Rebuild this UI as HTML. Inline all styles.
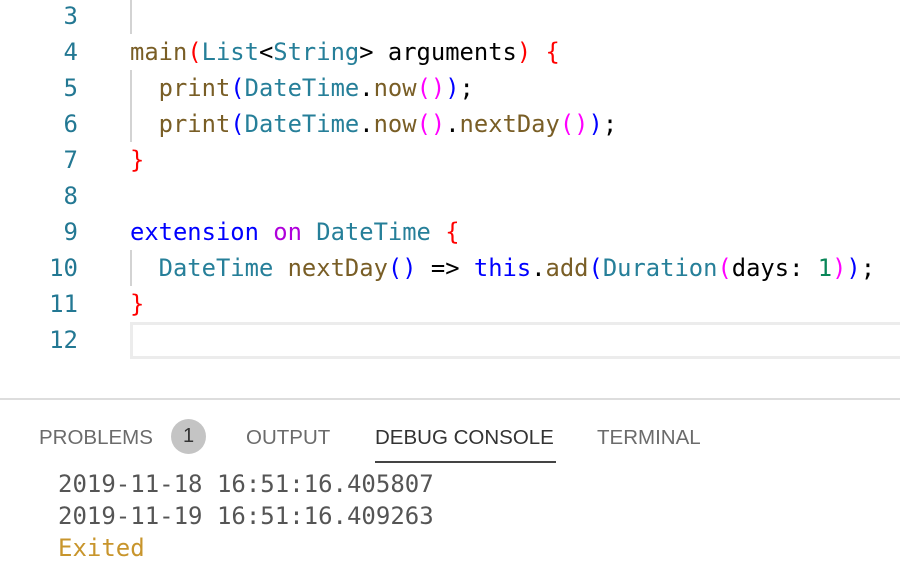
<!DOCTYPE html>
<html><head><style>
body{margin:0;width:900px;height:568px;background:#fff;overflow:hidden;position:relative;font-family:"DejaVu Sans Mono","Liberation Mono",monospace;}
.ln{position:absolute;left:0;width:78px;text-align:right;color:#237893;font-size:24px;line-height:36px;}
.cd{position:absolute;left:130px;font-size:23.8px;line-height:36px;white-space:pre;color:#000;}
.f{color:#795e26}.t{color:#267f99}.k{color:#0000ff}.p{color:#af00db}.r{color:#f00}.b{color:#0000ff}.m{color:#ff00ff}.n{color:#098658}
.guide{position:absolute;left:130px;width:2px;background:#d3d3d3}
.tab{position:absolute;top:426px;font-family:"Liberation Sans",sans-serif;font-size:20.5px;color:#6b6b6b;}
.con{position:absolute;left:58px;font-size:24px;line-height:32px;color:#555;white-space:pre;}
</style></head><body>
<div class="guide" style="top:0;height:34px"></div>
<div class="guide" style="top:70px;height:72px"></div>
<div class="guide" style="top:250px;height:36px"></div>
<div style="position:absolute;left:130px;top:322px;width:770px;height:31px;border:3px solid #ececec;border-right:none"></div>
<div class="ln" style="top:-2px">3<br>4<br>5<br>6<br>7<br>8<br>9<br>10<br>11<br>12</div>
<div class="cd" style="top:-2px">
<span class="f">main</span><span class="r">(</span><span class="t">List</span>&lt;<span class="t">String</span>&gt; arguments<span class="r">)</span> <span class="r">{</span>
  <span class="f">print</span><span class="b">(</span><span class="t">DateTime</span>.<span class="f">now</span><span class="m">()</span><span class="b">)</span>;
  <span class="f">print</span><span class="b">(</span><span class="t">DateTime</span>.<span class="f">now</span><span class="m">()</span>.<span class="f">nextDay</span><span class="m">()</span><span class="b">)</span>;
<span class="r">}</span>

<span class="k">extension</span> <span class="p">on</span> <span class="t">DateTime</span> <span class="r">{</span>
  <span class="t">DateTime</span> <span class="f">nextDay</span><span class="b">()</span> =&gt; <span class="k">this</span>.<span class="f">add</span><span class="b">(</span><span class="t">Duration</span><span class="m">(</span>days: <span class="n">1</span><span class="m">)</span><span class="b">)</span>;
<span class="r">}</span>
</div>
<div style="position:absolute;left:0;top:398px;width:900px;height:2px;background:#ddd"></div>
<div class="tab" style="left:39px">PROBLEMS</div>
<div style="position:absolute;left:171px;top:419px;width:35px;height:35px;border-radius:50%;background:#c4c4c4;color:#333;font-family:'Liberation Sans',sans-serif;font-size:20px;text-align:center;line-height:35px">1</div>
<div class="tab" style="left:246px">OUTPUT</div>
<div class="tab" style="left:375px;color:#333">DEBUG CONSOLE</div>
<div style="position:absolute;left:375px;top:461px;width:181px;height:2px;background:#444"></div>
<div class="tab" style="left:597px">TERMINAL</div>
<div class="con" style="top:468px">2019-11-18 16:51:16.405807
2019-11-19 16:51:16.409263
<span style="color:#c8952c">Exited</span></div>
</body></html>
